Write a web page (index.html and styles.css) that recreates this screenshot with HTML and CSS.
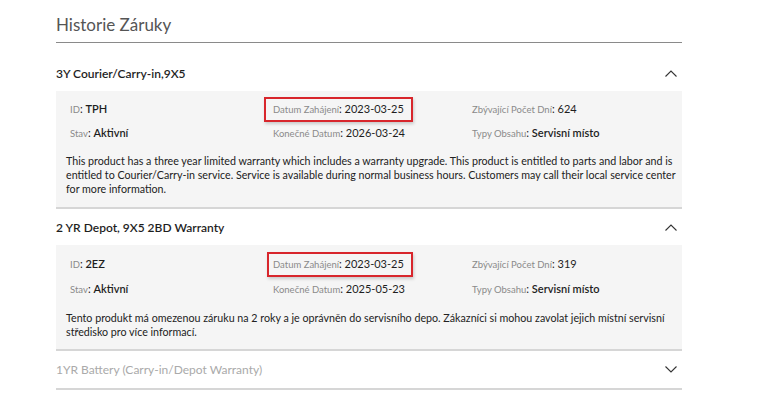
FILE: index.html
```html
<!DOCTYPE html>
<html lang="cs">
<head>
<meta charset="utf-8">
<title>Historie Záruky</title>
<link rel="stylesheet" href="styles.css">
</head>
<body>
<main class="page">
  <h1 class="title">Historie Záruky</h1>

  <section class="item open">
    <header class="item-head">
      <span class="item-name">3Y Courier/Carry-in,9X5</span>
      <svg class="chev" width="12" height="7" viewBox="0 0 12 7"><path d="M0.5 6.5 L6 1 L11.5 6.5" fill="none" stroke="#333" stroke-width="1.1"/></svg>
    </header>
    <div class="panel">
      <div class="grid">
        <div class="cell"><span class="lbl">ID</span>: <span class="val strong">TPH</span></div>
        <div class="cell hl"><span class="lbl">Datum Zahájení</span>: <span class="val">2023-03-25</span><span class="mark"></span></div>
        <div class="cell"><span class="lbl">Zbývající Počet Dní</span>: <span class="val">624</span></div>
        <div class="cell"><span class="lbl">Stav</span>: <span class="val strong">Aktivní</span></div>
        <div class="cell"><span class="lbl">Konečné Datum</span>: <span class="val">2026-03-24</span></div>
        <div class="cell"><span class="lbl">Typy Obsahu</span>: <span class="val strong">Servisní místo</span></div>
      </div>
      <p class="desc">This product has a three year limited warranty which includes a warranty upgrade. This product is entitled to parts and labor and is entitled to Courier/Carry-in service. Service is available during normal business hours. Customers may call their local service center for more information.</p>
    </div>
  </section>

  <section class="item open second">
    <header class="item-head">
      <span class="item-name">2 YR Depot, 9X5 2BD Warranty</span>
      <svg class="chev" width="12" height="7" viewBox="0 0 12 7"><path d="M0.5 6.5 L6 1 L11.5 6.5" fill="none" stroke="#333" stroke-width="1.1"/></svg>
    </header>
    <div class="panel">
      <div class="grid">
        <div class="cell"><span class="lbl">ID</span>: <span class="val strong">2EZ</span></div>
        <div class="cell hl"><span class="lbl">Datum Zahájení</span>: <span class="val">2023-03-25</span><span class="mark"></span></div>
        <div class="cell"><span class="lbl">Zbývající Počet Dní</span>: <span class="val">319</span></div>
        <div class="cell"><span class="lbl">Stav</span>: <span class="val strong">Aktivní</span></div>
        <div class="cell"><span class="lbl">Konečné Datum</span>: <span class="val">2025-05-23</span></div>
        <div class="cell"><span class="lbl">Typy Obsahu</span>: <span class="val strong">Servisní místo</span></div>
      </div>
      <p class="desc">Tento produkt má omezenou záruku na 2 roky a je oprávněn do servisního depo. Zákazníci si mohou zavolat jejich místní servisní středisko pro více informací.</p>
    </div>
  </section>

  <section class="item closed">
    <header class="item-head">
      <span class="item-name">1YR Battery (Carry-in/Depot Warranty)</span>
      <svg class="chev" width="12" height="7" viewBox="0 0 12 7"><path d="M0.5 0.5 L6 6 L11.5 0.5" fill="none" stroke="#333" stroke-width="1.1"/></svg>
    </header>
  </section>
</main>
</body>
</html>
```

FILE: styles.css
```css
* { box-sizing: border-box; }
html, body { margin: 0; padding: 0; background: #fff; }
body { font-family: Lato, "Noto Sans", sans-serif; color: #222; }

.page {
  width: 626px;
  margin-left: 56px;
  padding-top: 13px;
}

.title {
  margin: 0;
  font-size: 17px;
  font-weight: 400;
  color: #555;
  line-height: 24px;
  padding-bottom: 5px;
  border-bottom: 1px solid #8a8a8a;
  margin-bottom: 13px;
}

.item { border-bottom: 2px solid #d6d6d6; }

.item-head {
  height: 35px;
  display: flex;
  align-items: center;
  justify-content: space-between;
  padding-right: 5px;
}
.second .item-head { height: 36px; }
.closed .item-head { height: 37px; }

.item-name {
  font-size: 12px;
  font-weight: 600;
  color: #1e1e1e;
}
.closed .item-name { font-size: 12px; font-weight: 400; color: #aaa; }

.chev { display: block; }

.panel {
  background: #f5f5f5;
  padding: 9px 6px 11px 10px;
}
.second .panel { padding-top: 10px; padding-bottom: 10px; }

.grid {
  display: grid;
  grid-template-columns: 203px 199px 1fr;
  row-gap: 6px;
  padding-left: 4px;
}
.second .grid { row-gap: 7px; }

.cell {
  position: relative;
  height: 18px;
  line-height: 18px;
  font-size: 11px;
  color: #222;
  white-space: nowrap;
}
.lbl { font-size: 9.5px; color: #8a8a8a; }
.val { color: #1e1e1e; }
.strong { font-weight: 600; }

.mark {
  position: absolute;
  left: -9px;
  top: -3px;
  width: 149px;
  height: 25px;
  border: 2px solid #d8262c;
  box-shadow: 1px 2px 3px rgba(0,0,0,0.18);
}
.second .mark { left: -6px; width: 146px; }

.desc {
  margin: 12px 0 0 0;
  font-size: 10.7px;
  line-height: 14px;
  color: #222;
}
.second .desc { margin-top: 13px; }
```
